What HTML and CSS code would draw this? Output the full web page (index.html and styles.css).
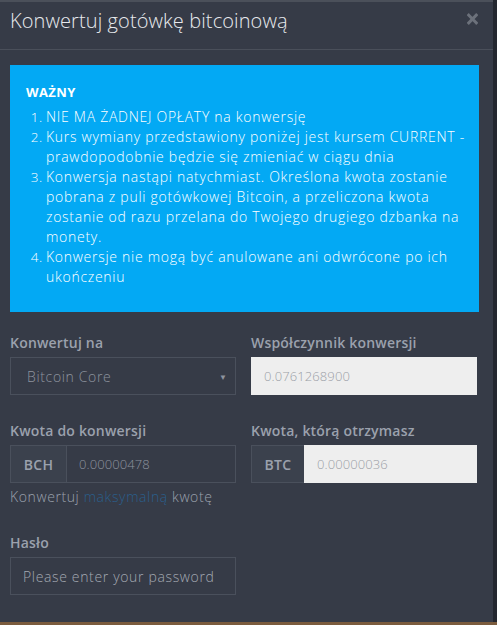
FILE: index.html
```html
<!DOCTYPE html>
<html lang="pl">
<head>
<meta charset="utf-8">
<title>Konwertuj gotówkę bitcoinową</title>
<link rel="stylesheet" href="styles.css">
</head>
<body>
<div class="page">
  <div class="modal">
    <div class="modal-header">
      <h4 class="modal-title">Konwertuj gotówkę bitcoinową</h4>
      <button class="close" type="button" aria-label="Close">
        <svg width="11" height="12" viewBox="0 0 11 12"><path d="M1.8 2.2 L9.2 9.8 M9.2 2.2 L1.8 9.8" stroke="#6c717b" stroke-width="3" stroke-linecap="square"/></svg>
      </button>
    </div>
    <div class="modal-body">
      <div class="alert">
        <div class="alert-title">WAŻNY</div>
        <ol class="alert-list">
          <li>NIE MA ŻADNEJ OPŁATY na konwersję</li>
          <li>Kurs wymiany przedstawiony poniżej jest kursem CURRENT - prawdopodobnie będzie się zmieniać w ciągu dnia</li>
          <li>Konwersja nastąpi natychmiast. Określona kwota zostanie pobrana z puli gotówkowej Bitcoin, a przeliczona kwota zostanie od razu przelana do Twojego drugiego dzbanka na monety.</li>
          <li>Konwersje nie mogą być anulowane ani odwrócone po ich ukończeniu</li>
        </ol>
      </div>

      <div class="row row-first">
        <div class="form-group">
          <label class="label">Konwertuj na</label>
          <div class="select">
            <span>Bitcoin Core</span>
            <span class="caret">▼</span>
          </div>
        </div>
        <div class="form-group">
          <label class="label">Współczynnik konwersji</label>
          <div class="input readonly num">0.0761268900</div>
        </div>
      </div>

      <div class="row row-next">
        <div class="form-group">
          <label class="label">Kwota do konwersji</label>
          <div class="input-group">
            <span class="addon">BCH</span>
            <div class="input grouped num">0.00000478</div>
          </div>
          <p class="hint">Konwertuj <a href="#" class="link">maksymalną</a> kwotę</p>
        </div>
        <div class="form-group">
          <label class="label">Kwota, którą otrzymasz</label>
          <div class="input-group">
            <span class="addon addon-btc">BTC</span>
            <div class="input grouped readonly num">0.00000036</div>
          </div>
        </div>
      </div>

      <div class="row row-next">
        <div class="form-group">
          <label class="label">Hasło</label>
          <div class="input placeholder">Please enter your password</div>
        </div>
      </div>
    </div>
  </div>
  <div class="side"></div>
</div>
</body>
</html>
```

FILE: styles.css
```css
* { box-sizing: border-box; }
html, body { margin: 0; padding: 0; }
body {
  width: 497px;
  height: 625px;
  overflow: hidden;
  background: #7b5c3e;
  font-family: "Open Sans", "Liberation Sans", sans-serif;
}
.page {
  display: flex;
  height: 622px;
}
.modal {
  width: 493px;
  height: 622px;
  background: #363b47;
  border-top: 2px solid #4b505a;
  color: #c9ccd3;
}
.side {
  flex: 1;
  background: #23272f;
}
.modal-header {
  height: 48px;
  border-bottom: 1px solid #4a4f5a;
  display: flex;
  justify-content: space-between;
  padding: 5px 15px 0 10px;
}
.modal-title {
  margin: 0;
  font-size: 20px;
  line-height: 28px;
  font-weight: 300;
  color: #e8eaee;
  letter-spacing: 0.1px;
}
.close {
  border: 0;
  background: none;
  padding: 0;
  margin-top: 6px;
  width: 11px;
  height: 12px;
  display: flex;
}
.modal-body {
  padding: 15px 14px 0 10px;
}
.alert {
  background: #03a9f4;
  color: #ffffff;
  padding: 17px 14px 16px 16px;
  height: 247px;
}
.alert-title {
  font-weight: 700;
  font-size: 13px;
  line-height: 20px;
  letter-spacing: 0.4px;
}
.alert-list {
  margin: 5px 0 0 0;
  padding-left: 20px;
  font-size: 14px;
  font-weight: 300;
  line-height: 20px;
  letter-spacing: 0.72px;
}
.alert-list li::marker {
  content: counter(list-item) ".\2009";
  font-size: 13.5px;
}
.row {
  display: flex;
  gap: 15px;
}
.row-first { margin-top: 21px; }
.row-next { margin-top: 26px; }
.form-group {
  width: 226px;
}
.label {
  display: block;
  font-size: 14px;
  font-weight: 600;
  color: #9ba1ad;
  line-height: 20px;
  margin-bottom: 4px;
  letter-spacing: 0.2px;
}
.select, .input {
  height: 38px;
  border: 1px solid #4a505c;
  display: flex;
  align-items: center;
  font-size: 14px;
  font-weight: 300;
  letter-spacing: 0.65px;
  color: #8e949f;
}
.select {
  justify-content: space-between;
  padding: 0 8px 0 16px;
}
.caret {
  font-size: 8px;
  color: #8e949f;
  letter-spacing: 0;
}
.input {
  padding: 0 12px;
}
.num {
  font-size: 13px;
  letter-spacing: 0.1px;
}
.readonly {
  background: #eeeeee;
  border-color: #eeeeee;
  color: #9b9fa7;
}
.input-group {
  display: flex;
  height: 38px;
}
.addon {
  width: 56px;
  height: 38px;
  display: flex;
  align-items: center;
  justify-content: center;
  background: #3b414d;
  border: 1px solid #4a505c;
  border-right: 0;
  font-size: 14px;
  font-weight: 600;
  color: #9ba1ad;
  letter-spacing: 0.3px;
}
.addon-btc { width: 53px; }
.grouped {
  flex: 1;
  height: 38px;
}
.hint {
  margin: 4px 0 0 0;
  font-size: 14px;
  font-weight: 300;
  line-height: 20px;
  letter-spacing: 0.6px;
  color: #9ba1ad;
}
.link {
  color: #2a5f8c;
  text-decoration: none;
}
.placeholder {
  color: #a4a9b2;
}
```
